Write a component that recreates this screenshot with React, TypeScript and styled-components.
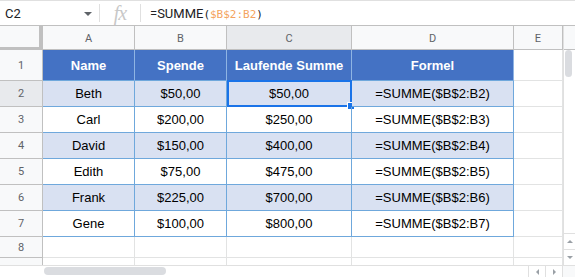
import styled, { createGlobalStyle, css } from 'styled-components';

const GlobalStyle = createGlobalStyle`
    html, body {
        margin: 0;
        padding: 0;
        background: #ffffff;
    }
`;

const BLUE_LINE = '#6fa8dc';
const GRID_LINE = '#e2e3e3';
const HEAD_LINE = '#c0c0c0';

const Sheet = styled.div`
    width: 575px;
    height: 277px;
    overflow: hidden;
    display: flex;
    flex-direction: column;
    font-family: 'Liberation Sans', Arial, sans-serif;
    background: #ffffff;
`;

const FormulaBar = styled.div`
    box-sizing: border-box;
    height: 26px;
    display: flex;
    align-items: center;
    border-top: 1px solid #e0e0e0;
    border-bottom: 1px solid ${HEAD_LINE};
`;

const NameBox = styled.div`
    width: 100px;
    height: 18px;
    box-sizing: border-box;
    display: flex;
    align-items: center;
    justify-content: space-between;
    padding: 0 7px 0 5px;
    border-right: 1px solid #e0e0e0;
    font-family: Roboto, 'Liberation Sans', sans-serif;
    font-size: 13px;
    color: #202124;
`;

const Caret = styled.span`
    width: 0;
    height: 0;
    border-left: 4px solid transparent;
    border-right: 4px solid transparent;
    border-top: 4px solid #5f6368;
    margin-top: 2px;
`;

const FxLabel = styled.div`
    width: 41px;
    height: 18px;
    box-sizing: border-box;
    display: flex;
    align-items: center;
    justify-content: center;
    border-right: 1px solid #e0e0e0;
    font-family: 'Liberation Serif', 'DejaVu Serif', serif;
    font-style: italic;
    font-size: 20px;
    color: #c8c8c8;
    letter-spacing: -1px;
`;

const FormulaText = styled.div`
    padding-left: 9px;
    font-family: Roboto, 'Liberation Sans', sans-serif;
    font-size: 13px;
    color: #202124;
    white-space: nowrap;
`;

const Mono = styled.span<{ $ref?: boolean }>`
    font-family: 'DejaVu Sans Mono', 'Liberation Mono', monospace;
    font-size: 11px;
    color: ${(p) => (p.$ref ? '#f4a460' : '#202124')};
`;

const Main = styled.div`
    display: flex;
    flex: 1;
    min-height: 0;
`;

const Grid = styled.div`
    display: grid;
    grid-template-columns: 43px 92px 92px 125px 162px 49px;
    grid-template-rows: 24px 31px repeat(6, 26px) 21px 1fr;
    width: 563px;
    overflow: hidden;
`;

const Corner = styled.div`
    box-sizing: border-box;
    background: #f8f9fa;
    border-right: 4px solid ${HEAD_LINE};
    border-bottom: 3px solid ${HEAD_LINE};
`;

const ColHead = styled.div<{ $active?: boolean }>`
    box-sizing: border-box;
    display: flex;
    align-items: center;
    justify-content: center;
    background: ${(p) => (p.$active ? '#e8eaed' : '#f8f9fa')};
    border-right: 1px solid ${HEAD_LINE};
    border-bottom: 1px solid ${HEAD_LINE};
    font-family: Roboto, 'Liberation Sans', sans-serif;
    font-size: 11px;
    color: #5f6368;
    padding-top: 1px;
`;

const RowHead = styled.div<{ $active?: boolean }>`
    box-sizing: border-box;
    display: flex;
    align-items: center;
    justify-content: center;
    overflow: hidden;
    background: ${(p) => (p.$active ? '#e8eaed' : '#f8f9fa')};
    border-right: 1px solid ${HEAD_LINE};
    border-bottom: 1px solid ${HEAD_LINE};
    font-family: Roboto, 'Liberation Sans', sans-serif;
    font-size: 11px;
    color: #5f6368;
`;

const PartialRowHead = styled(RowHead)`
    align-items: flex-start;
    padding-top: 5px;
    border-bottom: none;
`;

type CellKind = 'head' | 'band' | 'plain' | 'empty';

const Cell = styled.div<{ $kind: CellKind }>`
    box-sizing: border-box;
    position: relative;
    display: flex;
    align-items: center;
    justify-content: center;
    font-size: 13px;
    color: #000000;
    white-space: nowrap;
    border-right: 1px solid ${GRID_LINE};
    border-bottom: 1px solid ${GRID_LINE};
    ${(p) =>
        p.$kind === 'head' &&
        css`
            background: #4472c4;
            color: #ffffff;
            font-weight: bold;
            border-right-color: #8fb4e3;
            border-bottom-color: ${BLUE_LINE};
        `}
    ${(p) =>
        p.$kind === 'band' &&
        css`
            background: #d9e1f2;
            border-color: ${BLUE_LINE};
        `}
    ${(p) =>
        p.$kind === 'plain' &&
        css`
            border-color: ${BLUE_LINE};
        `}
`;

const LastRowCell = styled(Cell)`
    border-bottom: none;
`;

const Selection = styled.div`
    position: absolute;
    top: -1px;
    left: 0;
    right: -1px;
    bottom: -1px;
    border: 2px solid #1a73e8;
    pointer-events: none;
`;

const Handle = styled.span`
    position: absolute;
    right: -5px;
    bottom: -5px;
    width: 6px;
    height: 6px;
    background: #1a73e8;
    border: 1px solid #ffffff;
`;

const VScroll = styled.div`
    width: 12px;
    display: flex;
    flex-direction: column;
    border-left: 1px solid #e0e0e0;
    box-sizing: border-box;
`;

const ScrollHeadStub = styled.div`
    height: 24px;
    box-sizing: border-box;
    background: #f8f9fa;
    border-bottom: 1px solid ${HEAD_LINE};
`;

const VTrack = styled.div`
    flex: 1;
    padding: 0 3px 0 1px;
`;

const VThumb = styled.div`
    height: 27px;
    border-radius: 4px;
    background: #dadce0;
`;

const ArrowBox = styled.div`
    height: 16px;
    box-sizing: border-box;
    display: flex;
    align-items: center;
    justify-content: center;
    border-top: 1px solid #e0e0e0;
`;

const Arrow = styled.span<{ $dir: 'up' | 'down' | 'left' | 'right' }>`
    width: 0;
    height: 0;
    ${(p) =>
        p.$dir === 'up' &&
        css`
            border-left: 3px solid transparent;
            border-right: 3px solid transparent;
            border-bottom: 3px solid #9aa0a6;
        `}
    ${(p) =>
        p.$dir === 'down' &&
        css`
            border-left: 3px solid transparent;
            border-right: 3px solid transparent;
            border-top: 3px solid #9aa0a6;
        `}
    ${(p) =>
        p.$dir === 'left' &&
        css`
            border-top: 3px solid transparent;
            border-bottom: 3px solid transparent;
            border-right: 3px solid #9aa0a6;
        `}
    ${(p) =>
        p.$dir === 'right' &&
        css`
            border-top: 3px solid transparent;
            border-bottom: 3px solid transparent;
            border-left: 3px solid #9aa0a6;
        `}
`;

const HScroll = styled.div`
    height: 12px;
    box-sizing: border-box;
    display: flex;
    align-items: stretch;
    border-top: 1px solid #e0e0e0;
`;

const HTrack = styled.div`
    flex: 1;
    padding: 1px 0 2px 44px;
`;

const HThumb = styled.div`
    width: 122px;
    height: 100%;
    border-radius: 4px;
    background: #dadce0;
`;

const HArrowBox = styled.div`
    width: 16px;
    display: flex;
    align-items: center;
    justify-content: center;
    border-left: 1px solid #e0e0e0;
`;

const CornerBox = styled.div`
    width: 12px;
    border-left: 1px solid #e0e0e0;
    background: #f8f9fa;
`;

const rows = [
    { name: 'Beth', spende: '$50,00', summe: '$50,00', formel: '=SUMME($B$2:B2)' },
    { name: 'Carl', spende: '$200,00', summe: '$250,00', formel: '=SUMME($B$2:B3)' },
    { name: 'David', spende: '$150,00', summe: '$400,00', formel: '=SUMME($B$2:B4)' },
    { name: 'Edith', spende: '$75,00', summe: '$475,00', formel: '=SUMME($B$2:B5)' },
    { name: 'Frank', spende: '$225,00', summe: '$700,00', formel: '=SUMME($B$2:B6)' },
    { name: 'Gene', spende: '$100,00', summe: '$800,00', formel: '=SUMME($B$2:B7)' },
];

const columns = ['A', 'B', 'C', 'D', 'E'];

export default function App() {
    return (
        <>
            <GlobalStyle />
            <Sheet>
                <FormulaBar>
                    <NameBox>
                        C2
                        <Caret />
                    </NameBox>
                    <FxLabel>fx</FxLabel>
                    <FormulaText>
                        =SUMME<Mono>(</Mono>
                        <Mono $ref>$B$2:B2</Mono>
                        <Mono>)</Mono>
                    </FormulaText>
                </FormulaBar>
                <Main>
                    <Grid>
                        <Corner />
                        {columns.map((col) => (
                            <ColHead key={col} $active={col === 'C'}>
                                {col}
                            </ColHead>
                        ))}

                        <RowHead>1</RowHead>
                        <Cell $kind="head">Name</Cell>
                        <Cell $kind="head">Spende</Cell>
                        <Cell $kind="head">Laufende Summe</Cell>
                        <Cell $kind="head">Formel</Cell>
                        <Cell $kind="empty" />

                        {rows.map((row, index) => {
                            const kind: CellKind = index % 2 === 0 ? 'band' : 'plain';
                            return [
                                <RowHead key={`h-${index}`} $active={index === 0}>
                                    {index + 2}
                                </RowHead>,
                                <Cell key={`a-${index}`} $kind={kind}>{row.name}</Cell>,
                                <Cell key={`b-${index}`} $kind={kind}>{row.spende}</Cell>,
                                <Cell key={`c-${index}`} $kind={kind}>
                                    {row.summe}
                                    {index === 0 && (
                                        <Selection>
                                            <Handle />
                                        </Selection>
                                    )}
                                </Cell>,
                                <Cell key={`d-${index}`} $kind={kind}>{row.formel}</Cell>,
                                <Cell key={`e-${index}`} $kind="empty" />,
                            ];
                        })}

                        <RowHead>8</RowHead>
                        {columns.map((col) => (
                            <Cell key={`r8-${col}`} $kind="empty" />
                        ))}

                        <PartialRowHead>9</PartialRowHead>
                        {columns.map((col) => (
                            <LastRowCell key={`r9-${col}`} $kind="empty" />
                        ))}
                    </Grid>
                    <VScroll>
                        <ScrollHeadStub />
                        <VTrack>
                            <VThumb />
                        </VTrack>
                        <ArrowBox>
                            <Arrow $dir="up" />
                        </ArrowBox>
                        <ArrowBox>
                            <Arrow $dir="down" />
                        </ArrowBox>
                    </VScroll>
                </Main>
                <HScroll>
                    <HTrack>
                        <HThumb />
                    </HTrack>
                    <HArrowBox>
                        <Arrow $dir="left" />
                    </HArrowBox>
                    <HArrowBox>
                        <Arrow $dir="right" />
                    </HArrowBox>
                    <CornerBox />
                </HScroll>
            </Sheet>
        </>
    );
}
